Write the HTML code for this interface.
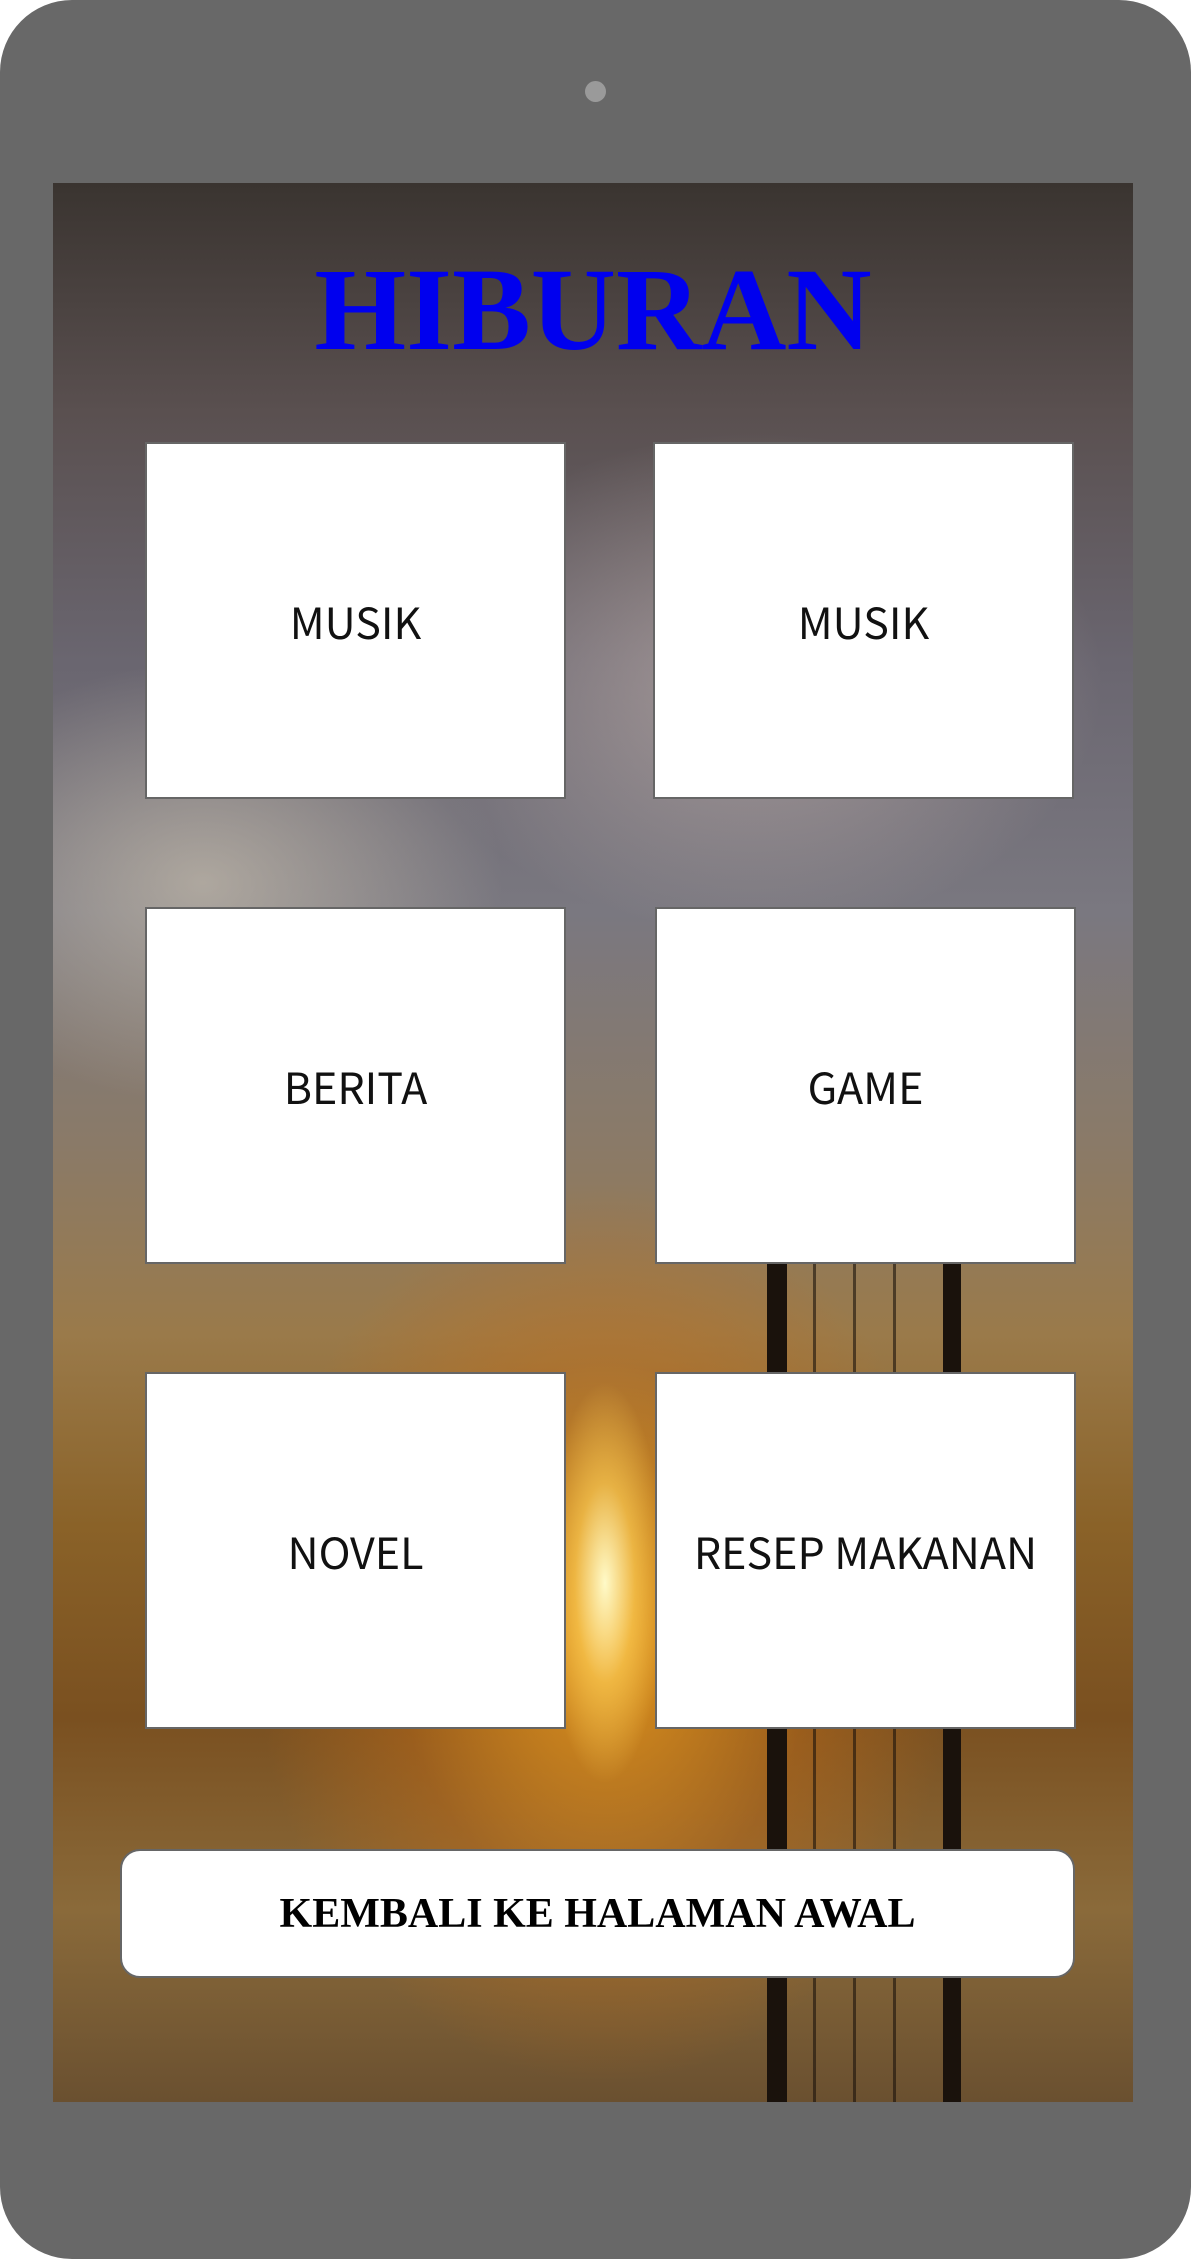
<!DOCTYPE html>
<html><head><meta charset="utf-8"><style>
html,body{margin:0;padding:0;background:#fff;}
body{width:1191px;height:2259px;position:relative;overflow:hidden;font-family:"Noto Sans CJK SC","DejaVu Sans",sans-serif;}
.dev{position:absolute;left:0;top:0;width:1191px;height:2259px;background:#686868;border-radius:72px;}
.cam{position:absolute;left:585px;top:81px;width:21px;height:21px;border-radius:50%;background:#9a9a9a;}
.scr{position:absolute;left:53px;top:183px;width:1080px;height:1919px;overflow:hidden;
background:
radial-gradient(ellipse 60px 200px at 552px 1400px, rgba(255,250,200,1), rgba(255,210,90,.6) 50%, rgba(255,180,40,0) 100%),
radial-gradient(ellipse 350px 450px at 552px 1450px, rgba(240,160,30,.9), rgba(200,110,20,.4) 60%, rgba(0,0,0,0) 100%),
radial-gradient(ellipse 300px 220px at 150px 700px, rgba(210,200,180,.6), rgba(0,0,0,0)),
radial-gradient(ellipse 350px 250px at 700px 500px, rgba(220,200,190,.5), rgba(0,0,0,0)),
linear-gradient(180deg,#3a3430 0%,#5a5050 12%,#6a6670 25%,#7a7880 38%,#8a7a68 50%,#9a7a4a 60%,#8a6228 70%,#7a5020 80%,#8a6a3a 90%,#6a5030 100%);}
.pole{position:absolute;background:#1a120c;}
h1{position:absolute;left:0;width:1080px;top:68px;margin:0;text-align:center;font-family:"Liberation Serif",serif;font-weight:bold;font-size:118px;color:#0000ee;line-height:1;}
.box{position:absolute;width:421px;height:357px;background:#fff;border:2px solid #666;box-sizing:border-box;display:flex;align-items:center;justify-content:center;font-size:43px;color:#111;padding-top:0px;}
.btn{position:absolute;left:67px;top:1666px;width:955px;height:129px;background:#fff;border:2px solid #666;border-radius:20px;box-sizing:border-box;display:flex;align-items:center;justify-content:center;font-family:"Liberation Serif",serif;font-weight:bold;font-size:42px;color:#000;}
</style></head><body>
<div class="dev"></div>
<div class="cam"></div>
<div class="scr">
<div class="pole" style="left:714px;top:1080px;width:20px;height:840px"></div>
<div class="pole" style="left:890px;top:1080px;width:18px;height:840px"></div>
<div class="pole" style="left:760px;top:1080px;width:3px;height:840px;opacity:.6"></div>
<div class="pole" style="left:800px;top:1080px;width:3px;height:840px;opacity:.6"></div>
<div class="pole" style="left:840px;top:1080px;width:3px;height:840px;opacity:.6"></div>
<h1>HIBURAN</h1>
<div class="box" style="left:92px;top:259px">MUSIK</div>
<div class="box" style="left:600px;top:259px">MUSIK</div>
<div class="box" style="left:92px;top:724px">BERITA</div>
<div class="box" style="left:602px;top:724px">GAME</div>
<div class="box" style="left:92px;top:1189px">NOVEL</div>
<div class="box" style="left:602px;top:1189px">RESEP MAKANAN</div>
<div class="btn">KEMBALI KE HALAMAN AWAL</div>
</div>
</body></html>
